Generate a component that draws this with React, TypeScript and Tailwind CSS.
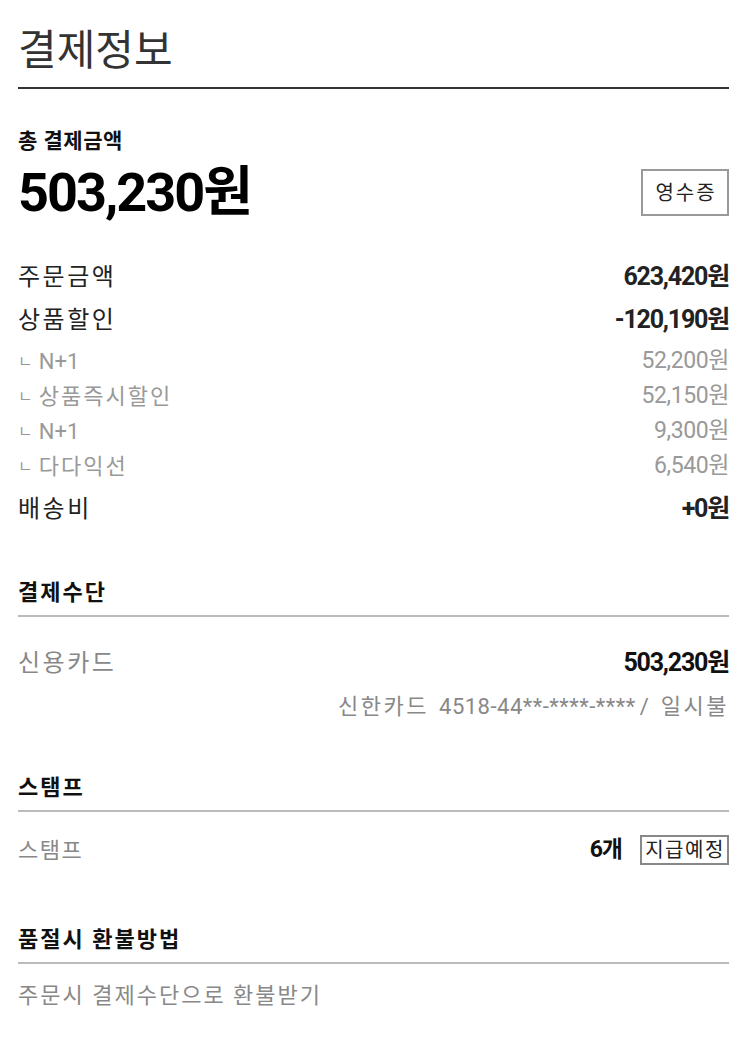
const font = "font-['Roboto','Noto_Sans_CJK_KR',sans-serif]"

const Row = ({ label, value }: { label: string; value: string }) => (
  <div className="flex h-[43px] items-center justify-between text-[#222]">
    <span className="text-[24px] tracking-[2.5px]">{label}</span>
    <span className="text-[25px] font-bold tracking-[-1.2px]">{value}</span>
  </div>
)

const SubRow = ({ label, value }: { label: string; value: string }) => (
  <div className="flex h-[35px] items-center justify-between text-[#999]">
    <span className="flex items-center">
      <span className="mr-[6px] text-[16px]">ㄴ</span>
      <span className={/[가-힣]/.test(label) ? 'text-[22px] tracking-[2px]' : 'text-[22px]'}>{label}</span>
    </span>
    <span className="text-[23px] tracking-[-0.4px]">{value}</span>
  </div>
)

const SectionHead = ({ title }: { title: string }) => (
  <div className="flex h-[47px] items-center border-b-2 border-[#bbb] text-[22px] font-bold tracking-[2px] text-[#111]">
    {title}
  </div>
)

export default function App() {
  return (
    <div className={`${font} min-h-[1040px] bg-white pl-[18px] pr-[21px]`}>
      <div className="flex h-[89px] items-center border-b-2 border-[#333] pt-[13px] text-[42px] text-[#333]">결제정보</div>

      <div className="flex items-end justify-between pt-[37px]">
        <div>
          <div className="text-[21px] font-bold leading-[30px] tracking-[0.5px] text-[#111]">총 결제금액</div>
          <div className="mt-[7px] text-[54px] font-bold leading-[60px] tracking-[-2px] text-black">503,230원</div>
        </div>
        <div className="mb-[7px] flex h-[47px] w-[88px] items-center justify-center border-2 border-[#999] pl-[2px] text-[20px] tracking-[2px] text-[#222]">
          영수증
        </div>
      </div>

      <div className="mt-[32px]">
        <Row label="주문금액" value="623,420원" />
        <Row label="상품할인" value="-120,190원" />
        <div className="py-[3px]">
          <SubRow label="N+1" value="52,200원" />
          <SubRow label="상품즉시할인" value="52,150원" />
          <SubRow label="N+1" value="9,300원" />
          <SubRow label="다다익선" value="6,540원" />
        </div>
        <Row label="배송비" value="+0원" />
      </div>

      <div className="mt-[40px]">
        <SectionHead title="결제수단" />
        <div className="mt-[31px] flex h-[30px] items-center justify-between">
          <span className="text-[24px] tracking-[2.5px] text-[#888]">신용카드</span>
          <span className="text-[25px] font-bold tracking-[-1.2px] text-[#111]">503,230원</span>
        </div>
        <div className="mt-[13px] flex h-[30px] items-center justify-end text-[22px] text-[#888]">
          <span className="tracking-[2.5px]">신한카드</span>
          <span className="ml-[10px] tracking-[0.5px]">4518-44**-****-****</span>
          <span className="ml-[4px]">/</span>
          <span className="ml-[12px] tracking-[2.5px]">일시불</span>
        </div>
      </div>

      <div className="mt-[44px]">
        <SectionHead title="스탬프" />
        <div className="mt-[23px] flex h-[30px] items-center justify-between">
          <span className="text-[22px] tracking-[1.5px] text-[#888]">스탬프</span>
          <div className="flex items-center gap-[18px]">
            <span className="text-[23px] font-bold tracking-[-1px] text-[#111]">6개</span>
            <span className="flex h-[30px] w-[89px] items-center justify-center border-2 border-[#888] pl-[1px] text-[20px] tracking-[1.5px] text-[#222]">
              지급예정
            </span>
          </div>
        </div>
      </div>

      <div className="mt-[52px]">
        <SectionHead title="품절시 환불방법" />
        <div className="mt-[16px] flex h-[30px] items-center text-[22px] tracking-[2px] text-[#888]">
          주문시 결제수단으로 환불받기
        </div>
      </div>
    </div>
  )
}
